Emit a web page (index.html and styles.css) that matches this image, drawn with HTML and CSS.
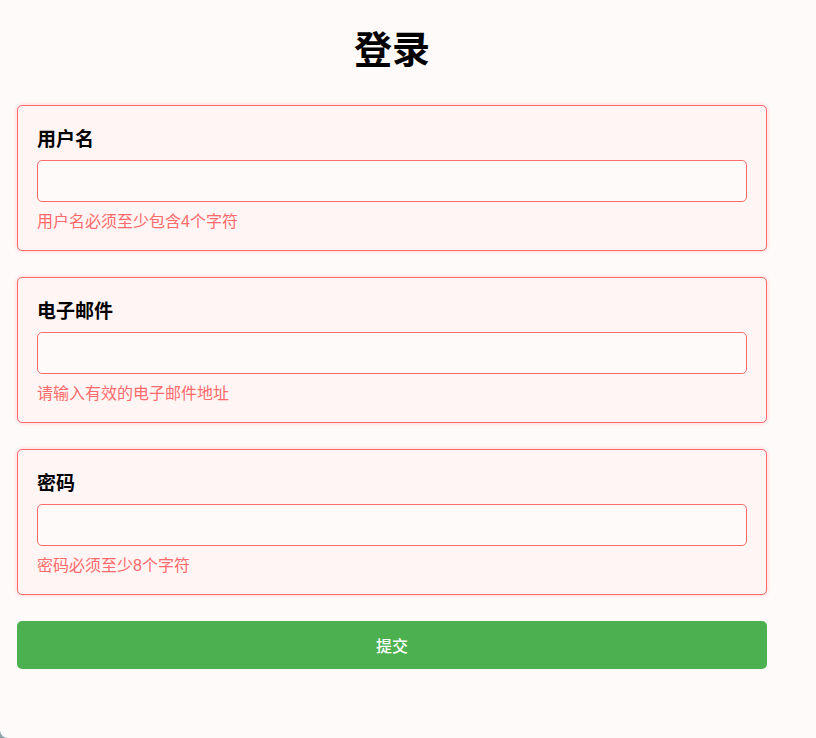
FILE: index.html
```html
<!doctype html>
<html lang="zh-CN">

<head>
    <meta charset="utf-8">
    <title>登录</title>
    <meta name="viewport" content="width=device-width, initial-scale=1">
    <link rel="stylesheet" href="styles.css">
</head>

<body>
    <div class="page">
        <h1 class="title">登录</h1>
        <form class="login-form">
            <div class="form-group invalid">
                <label for="username">用户名</label>
                <input type="text" id="username" name="username">
                <div class="error">用户名必须至少包含4个字符</div>
            </div>
            <div class="form-group invalid">
                <label for="email">电子邮件</label>
                <input type="email" id="email" name="email">
                <div class="error">请输入有效的电子邮件地址</div>
            </div>
            <div class="form-group invalid">
                <label for="password">密码</label>
                <input type="password" id="password" name="password">
                <div class="error">密码必须至少8个字符</div>
            </div>
            <button type="submit" class="btn-submit">提交</button>
        </form>
    </div>
</body>

</html>
```

FILE: styles.css
```css
html,
body {
    margin: 0;
    padding: 0;
    background: #8fa3a8;
    font-family: "Liberation Sans", "Noto Sans CJK SC", sans-serif;
    font-size: 16px;
}

.page {
    min-height: 738px;
    box-sizing: border-box;
    padding: 23px 17px 0;
    background: #fffafa;
    border-bottom-left-radius: 8px;
}

.title {
    width: 750px;
    margin: 0 0 27px;
    font-size: 38px;
    line-height: 55px;
    font-weight: bold;
    color: #000;
    text-align: center;
}

.login-form {
    width: 750px;
}

.form-group {
    display: flex;
    flex-direction: column;
    padding: 20px 19px 17px;
    margin-bottom: 26px;
    background: #fff5f5;
    border: 1px solid #ddd;
    border-radius: 5px;
}

.form-group.invalid {
    border-color: #ff6b6b;
    box-shadow: 0 0 4px rgba(255, 107, 107, 0.35);
}

.form-group label {
    font-size: 19px;
    line-height: 28px;
    font-weight: bold;
    color: #000;
    margin-bottom: 6px;
}

.form-group input {
    height: 42px;
    box-sizing: border-box;
    padding: 0 10px;
    font-size: 16px;
    background: #fffafa;
    border: 1px solid #ccc;
    border-radius: 5px;
    outline: none;
}

.form-group.invalid input {
    border-color: #ff6b6b;
}

.error {
    margin-top: 8px;
    font-size: 16px;
    line-height: 23px;
    color: #ff6b6b;
}

.btn-submit {
    display: block;
    width: 100%;
    height: 48px;
    padding: 0;
    border: none;
    border-radius: 5px;
    background: #4caf50;
    color: #fff;
    font-family: inherit;
    font-size: 16px;
    font-weight: 500;
    cursor: pointer;
}

.btn-submit:hover {
    background: #45a049;
}
```
